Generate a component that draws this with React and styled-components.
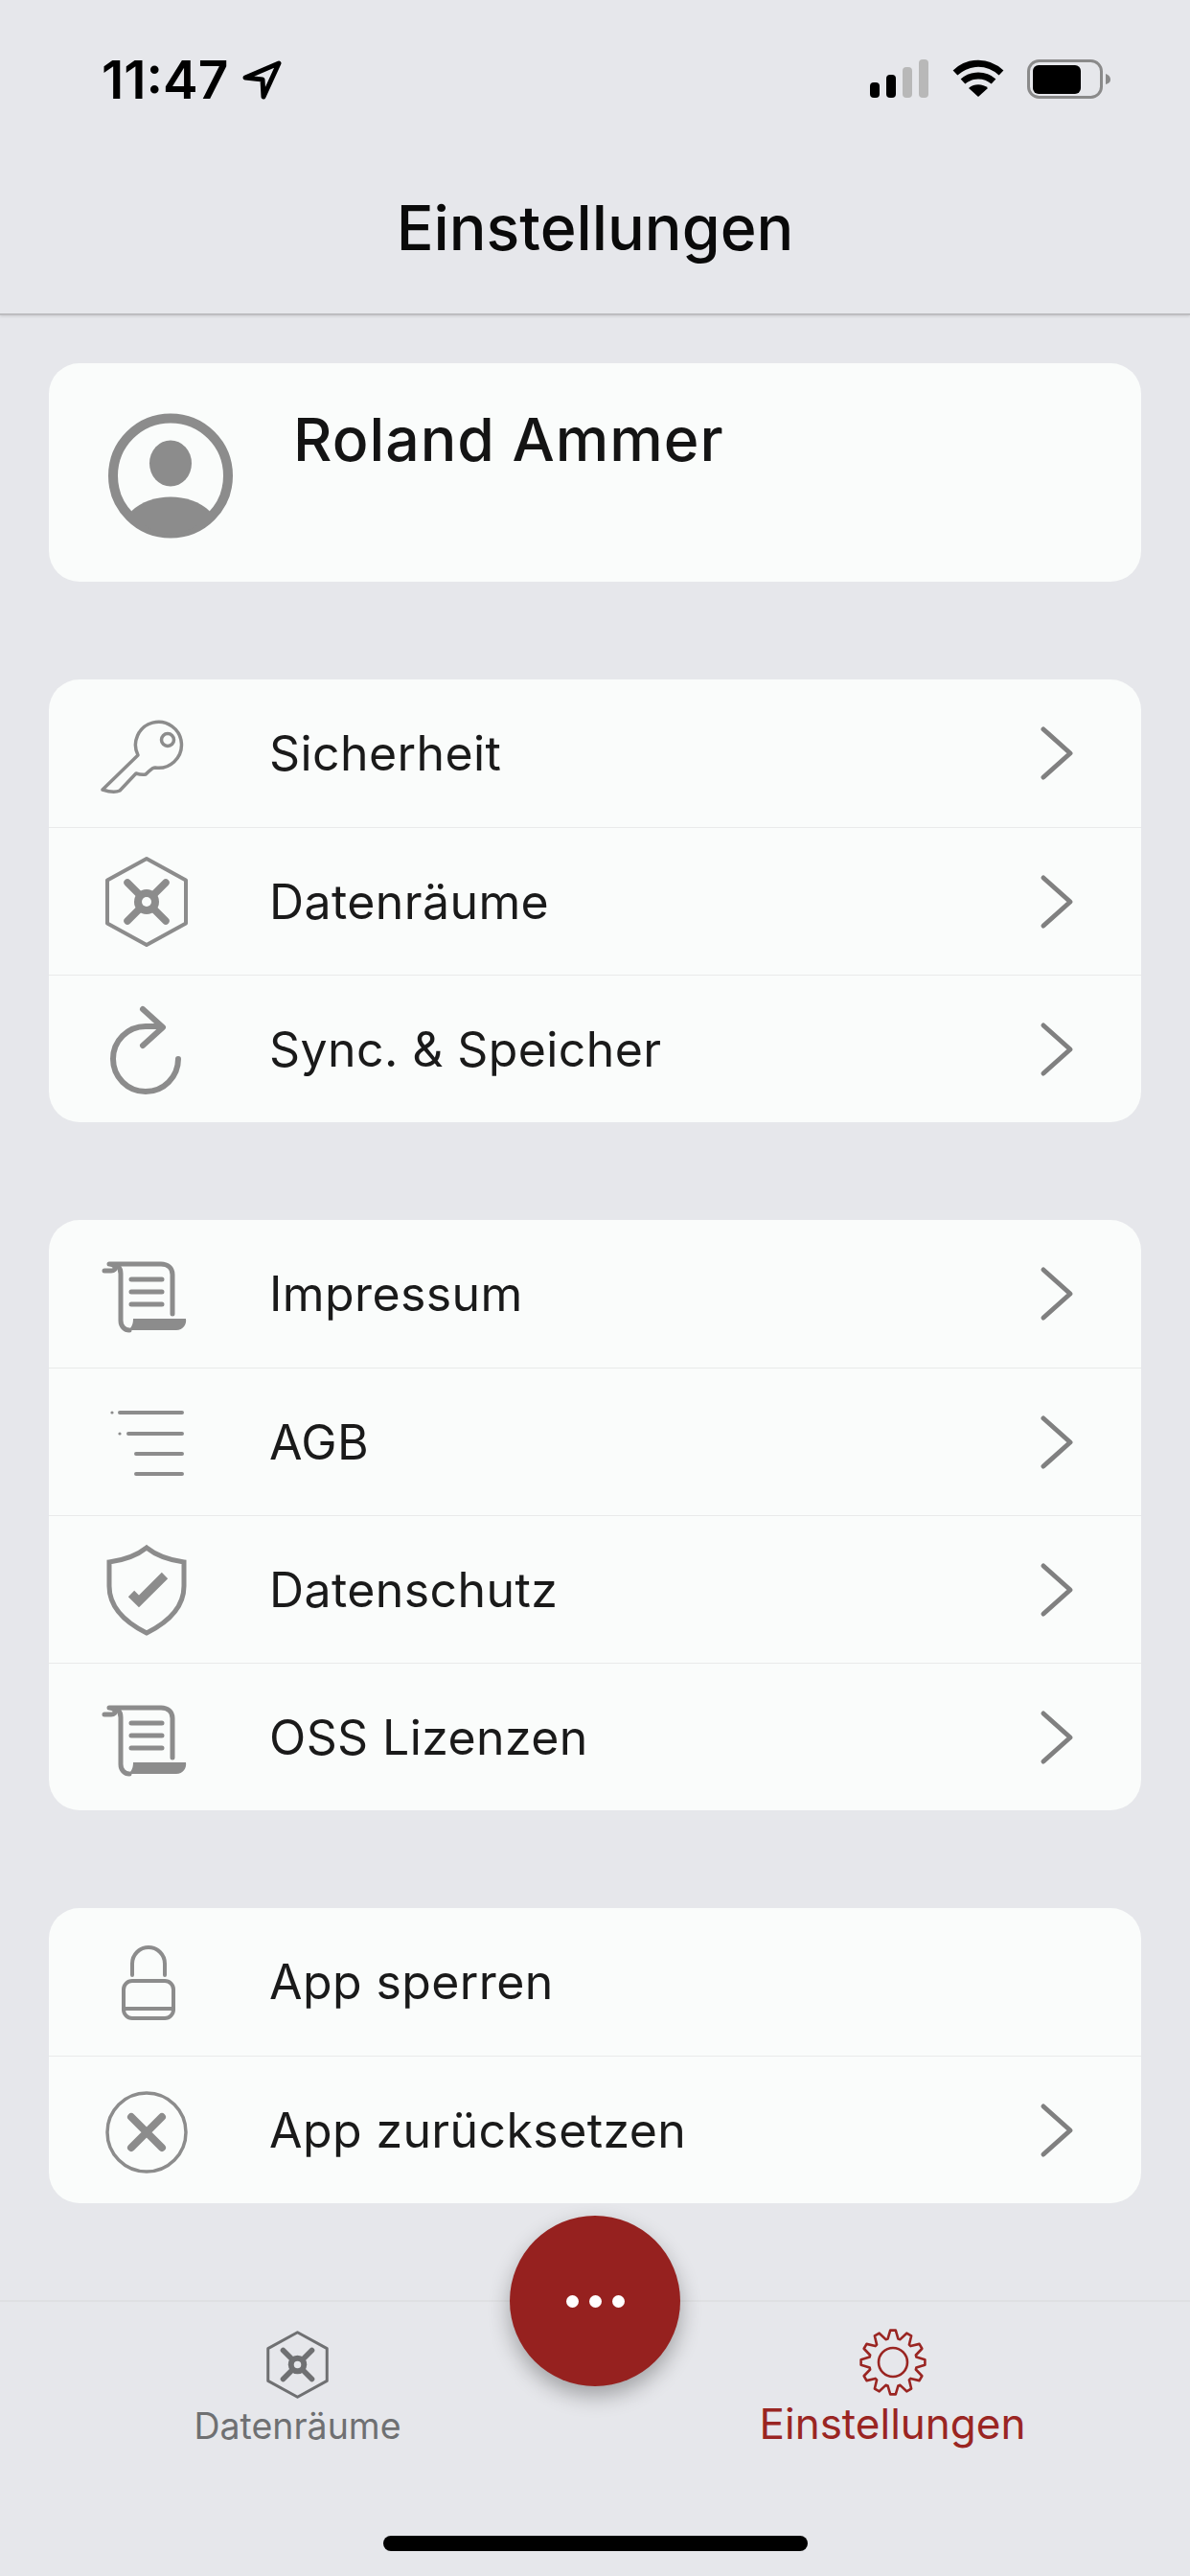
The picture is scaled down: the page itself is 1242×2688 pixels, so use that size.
import React from 'react';
import styled, {createGlobalStyle} from 'styled-components';

const GlobalStyle = createGlobalStyle`
    html, body {
        margin: 0;
        padding: 0;
        background: #e6e7eb;
    }
    * {
        box-sizing: border-box;
    }
`
const Phone = styled.div`
    width: 1242px;
    height: 2688px;
    display: flex;
    flex-direction: column;
    overflow: hidden;
    background: #e6e7eb;
    font-family: Inter, "Noto Sans", sans-serif;
`
const Header = styled.header`
    height: 329px;
    flex-shrink: 0;
    border-bottom: 2px solid #bdbdc0;
    box-shadow: 0 1px 3px rgba(0, 0, 0, 0.12);
`
const StatusBar = styled.div`
    height: 62px;
    margin-top: 62px;
    padding: 0 82px 0 106px;
    display: flex;
    justify-content: space-between;
    align-items: flex-start;
`
const TimeBox = styled.div`
    display: flex;
    align-items: center;
    gap: 15px;
`
const Time = styled.span`
    font-size: 55px;
    line-height: 42px;
    font-weight: 600;
    color: #000;
`
const StatusIcons = styled.div`
    display: flex;
    align-items: flex-start;
    gap: 24px;
`
const Title = styled.h1`
    margin: 78px 0 0;
    text-align: center;
    font-size: 64.5px;
    line-height: 72px;
    font-weight: 500;
    color: #0a0a0a;
`
const Content = styled.main`
    flex: 1;
    padding: 50px 51px 0;
    display: flex;
    flex-direction: column;
    gap: 102px;
`
const Card = styled.section`
    background: #fafcfb;
    border-radius: 32px;
    overflow: hidden;
`
const ProfileCard = styled(Card)`
    height: 228px;
    padding: 52px 0 0 62px;
    display: flex;
    align-items: flex-start;
    gap: 63px;
`
const ProfileName = styled.div`
    font-size: 62.5px;
    line-height: 72px;
    font-weight: 500;
    letter-spacing: 1px;
    margin-top: -9px;
    color: #141414;
`
const Row = styled.div`
    height: 154px;
    display: flex;
    align-items: center;
    padding: 0 70px 0 52px;
    & + & {
        border-top: 1px solid #e9eaea;
    }
`
const RowLabel = styled.span`
    flex: 1;
    margin-left: 78px;
    font-size: 50px;
    letter-spacing: 0.4px;
    color: #1a1a1a;
`
const TabBar = styled.nav`
    height: 288px;
    flex-shrink: 0;
    position: relative;
    border-top: 2px solid #dfe0e3;
    display: flex;
    flex-direction: column;
`
const TabItems = styled.div`
    flex: 1;
    display: grid;
    grid-template-columns: 1fr 1fr;
    padding-top: 28px;
`
const TabItem = styled.div`
    display: flex;
    flex-direction: column;
    align-items: center;
    color: ${props => props.$active ? '#9a2522' : '#6f7072'};
`
const TabLabel = styled.span`
    font-size: ${props => props.$active ? '44px' : '37.5px'};
    line-height: 50px;
    margin-top: ${props => props.$active ? '4px' : '2px'};
`
const Fab = styled.button`
    position: absolute;
    left: 532px;
    top: -90px;
    width: 178px;
    height: 178px;
    border: 0;
    border-radius: 50%;
    background: #96211f;
    box-shadow: 0 10px 22px rgba(0, 0, 0, 0.3);
    display: flex;
    justify-content: center;
    align-items: center;
    gap: 11px;
`
const FabDot = styled.span`
    width: 13px;
    height: 13px;
    border-radius: 50%;
    background: #fff;
`
const HomeIndicator = styled.div`
    width: 443px;
    height: 16px;
    margin: 0 auto 26px;
    border-radius: 8px;
    background: #000;
`

const GRAY = '#8c8c8c';

function Icon({children, size = 100, color = GRAY, sw = 3.5}) {
    return (
        <svg width={size} height={size} viewBox="0 0 100 100" fill="none" stroke={color} strokeWidth={sw} strokeLinecap="round" strokeLinejoin="round" style={{flexShrink: 0}}>
            {children}
        </svg>
    );
}

const KeyIcon = () => (
    <Icon>
        <path d="M4 88 L41 52 A24 24 0 1 1 59 65 C55 65 53 69 49 72 C45 73 42 72 39 71 L22 89 C18 91 10 90 4 88 Z" />
        <circle cx="72" cy="36" r="6.5" />
    </Icon>
);

const VaultIcon = ({size, color = GRAY, bg = '#fafcfb'}) => (
    <Icon size={size} color={color} sw={4}>
        <path d="M50 5 L91 27.5 V72.5 L50 95 L9 72.5 V27.5 Z" />
        <path d="M30 30 L70 70 M70 30 L30 70" strokeWidth="7.5" />
        <circle cx="50" cy="50" r="13" fill={color} stroke="none" />
        <circle cx="50" cy="50" r="5" fill={bg} stroke="none" />
    </Icon>
);

const SyncIcon = () => (
    <Icon sw={6}>
        <path d="M83 60 A34 34 0 1 1 49 26 H62" />
        <path d="M46 8 L67 27 L46 46" strokeLinecap="round" />
    </Icon>
);

const ScrollIcon = () => (
    <Icon sw={5}>
        <path d="M6 26 H13 C16 26 18 24 17 22 C16 20 13 19 11 19 H65 C72 19 77 23 77 30 V71" />
        <path d="M20 21 C22 23 23 26 23 29 V78 C23 84 27 88 32 88" />
        <path d="M36 76 H91 C92 82 88 88 81 88 H30 C34 86 36 82 36 76 Z" fill={GRAY} stroke="none" />
        <path d="M34 35 H66 M34 48 H66 M34 61 H66" />
    </Icon>
);

const ListIcon = () => (
    <Icon sw={4}>
        <path d="M22 19 H87 M31 41 H87 M39 62 H87 M39 83 H87" />
        <circle cx="14" cy="19" r="1.6" fill={GRAY} stroke="none" />
        <circle cx="22" cy="41" r="1.6" fill={GRAY} stroke="none" />
    </Icon>
);

const ShieldIcon = () => (
    <Icon sw={5}>
        <path d="M50 6 C40 14 26 19 11 21 V46 C11 69 30 85 50 95 C70 85 89 69 89 46 V21 C74 19 60 14 50 6 Z" strokeLinejoin="miter" />
        <path d="M34 54 L42 62 L69 35" strokeWidth="9" strokeLinecap="butt" strokeLinejoin="miter" />
    </Icon>
);

const LockIcon = () => (
    <Icon sw={4}>
        <path d="M35 43 V31 A17 17 0 0 1 69 31 V43" />
        <rect x="26" y="49" width="52" height="39" rx="9" />
        <path d="M26 78 H78" />
    </Icon>
);

const ResetIcon = () => (
    <Icon sw={3.5}>
        <circle cx="50" cy="52" r="41" />
        <path d="M34 36 L66 68 M66 36 L34 68" strokeWidth="8" />
    </Icon>
);

const Chevron = () => (
    <svg width="36" height="60" viewBox="0 0 36 60" fill="none" stroke="#808080" strokeWidth="5" strokeLinecap="round" strokeLinejoin="round">
        <path d="M4 5 L32 30 L4 55" />
    </svg>
);

const Avatar = () => (
    <svg width="130" height="131" viewBox="0 0 130 130" style={{flexShrink: 0}}>
        <circle cx="65" cy="65" r="60" fill="none" stroke={GRAY} strokeWidth="10" />
        <ellipse cx="65" cy="52" rx="22" ry="24" fill={GRAY} />
        <path d="M24 102 C34 92 50 87 65 87 C80 87 96 92 106 102 A48 48 0 0 1 24 102 Z" fill={GRAY} />
    </svg>
);

// 12 zahne, aussen 33, innen 25
const gearPath = () => {
    const point = (r, a) => `${(35 + r * Math.sin(a)).toFixed(2)} ${(35 - r * Math.cos(a)).toFixed(2)}`;
    const step = Math.PI / 6;
    let d = '';
    for (let i = 0; i < 12; i++) {
        const a = i * step;
        d += `${i === 0 ? 'M' : 'L'}${point(25, a - step * 0.42)} L${point(33.5, a - step * 0.16)} L${point(33.5, a + step * 0.16)} L${point(25, a + step * 0.42)} `;
    }
    return d + 'Z';
};

const GearIcon = () => (
    <svg width="70" height="70" viewBox="0 0 70 70" fill="none" stroke="#9a2522" strokeWidth="2.6" strokeLinejoin="round">
        <path d={gearPath()} />
        <circle cx="35" cy="35" r="15" />
    </svg>
);

const SignalIcon = () => (
    <svg width="62" height="41" viewBox="0 0 62 41">
        <rect x="0" y="24" width="10" height="16" rx="4" fill="#000" />
        <rect x="17" y="16" width="10" height="24" rx="4" fill="#000" />
        <rect x="34" y="8" width="10" height="32" rx="4" fill="#b8b8b8" />
        <rect x="51" y="0" width="10" height="40" rx="4" fill="#b8b8b8" />
    </svg>
);

const WifiIcon = () => (
    <svg width="54" height="41" viewBox="0 0 54 41" fill="none" stroke="#000" strokeWidth="7">
        <path d="M3 14 C17 1 37 1 51 14" />
        <path d="M11 23 C20 15 34 15 43 23" />
        <path d="M27 39 L17 30 C22 25 32 25 37 30 Z" fill="#000" stroke="none" />
    </svg>
);

const BatteryIcon = () => (
    <svg width="88" height="42" viewBox="0 0 88 42">
        <rect x="1.5" y="1.5" width="76" height="38" rx="11" fill="none" stroke="#8a8a8a" strokeWidth="3" />
        <rect x="6" y="6" width="50" height="30" rx="6" fill="#000" />
        <path d="M82 15 C85 16 87 18 87 21 C87 24 85 25 82 26 Z" fill="#8a8a8a" />
    </svg>
);

const LocationIcon = () => (
    <svg width="41" height="41" viewBox="0 0 41 41" fill="none" stroke="#000" strokeWidth="5" strokeLinejoin="round">
        <path d="M3 18 L38 3 L22 38 L21 20 Z" />
    </svg>
);

const groups = [
    [
        {label: 'Sicherheit', icon: <KeyIcon />, arrow: true},
        {label: 'Datenräume', icon: <VaultIcon />, arrow: true},
        {label: 'Sync. & Speicher', icon: <SyncIcon />, arrow: true},
    ],
    [
        {label: 'Impressum', icon: <ScrollIcon />, arrow: true},
        {label: 'AGB', icon: <ListIcon />, arrow: true},
        {label: 'Datenschutz', icon: <ShieldIcon />, arrow: true},
        {label: 'OSS Lizenzen', icon: <ScrollIcon />, arrow: true},
    ],
    [
        {label: 'App sperren', icon: <LockIcon />, arrow: false},
        {label: 'App zurücksetzen', icon: <ResetIcon />, arrow: true},
    ],
];

function App() {
    return (
        <Phone>
            <GlobalStyle />
            <Header>
                <StatusBar>
                    <TimeBox>
                        <Time>11:47</Time>
                        <LocationIcon />
                    </TimeBox>
                    <StatusIcons>
                        <SignalIcon />
                        <WifiIcon />
                        <BatteryIcon />
                    </StatusIcons>
                </StatusBar>
                <Title>Einstellungen</Title>
            </Header>
            <Content>
                <ProfileCard>
                    <Avatar />
                    <ProfileName>Roland Ammer</ProfileName>
                </ProfileCard>
                {groups.map((group, i) => (
                    <Card key={i}>
                        {group.map(item => (
                            <Row key={item.label}>
                                {item.icon}
                                <RowLabel>{item.label}</RowLabel>
                                {item.arrow && <Chevron />}
                            </Row>
                        ))}
                    </Card>
                ))}
            </Content>
            <TabBar>
                <TabItems>
                    <TabItem>
                        <VaultIcon size={75} color="#6f7072" bg="#e6e7eb" />
                        <TabLabel>Datenräume</TabLabel>
                    </TabItem>
                    <TabItem $active>
                        <GearIcon />
                        <TabLabel $active>Einstellungen</TabLabel>
                    </TabItem>
                </TabItems>
                <Fab aria-label="Mehr">
                    <FabDot />
                    <FabDot />
                    <FabDot />
                </Fab>
                <HomeIndicator />
            </TabBar>
        </Phone>
    );
}

export default App;
